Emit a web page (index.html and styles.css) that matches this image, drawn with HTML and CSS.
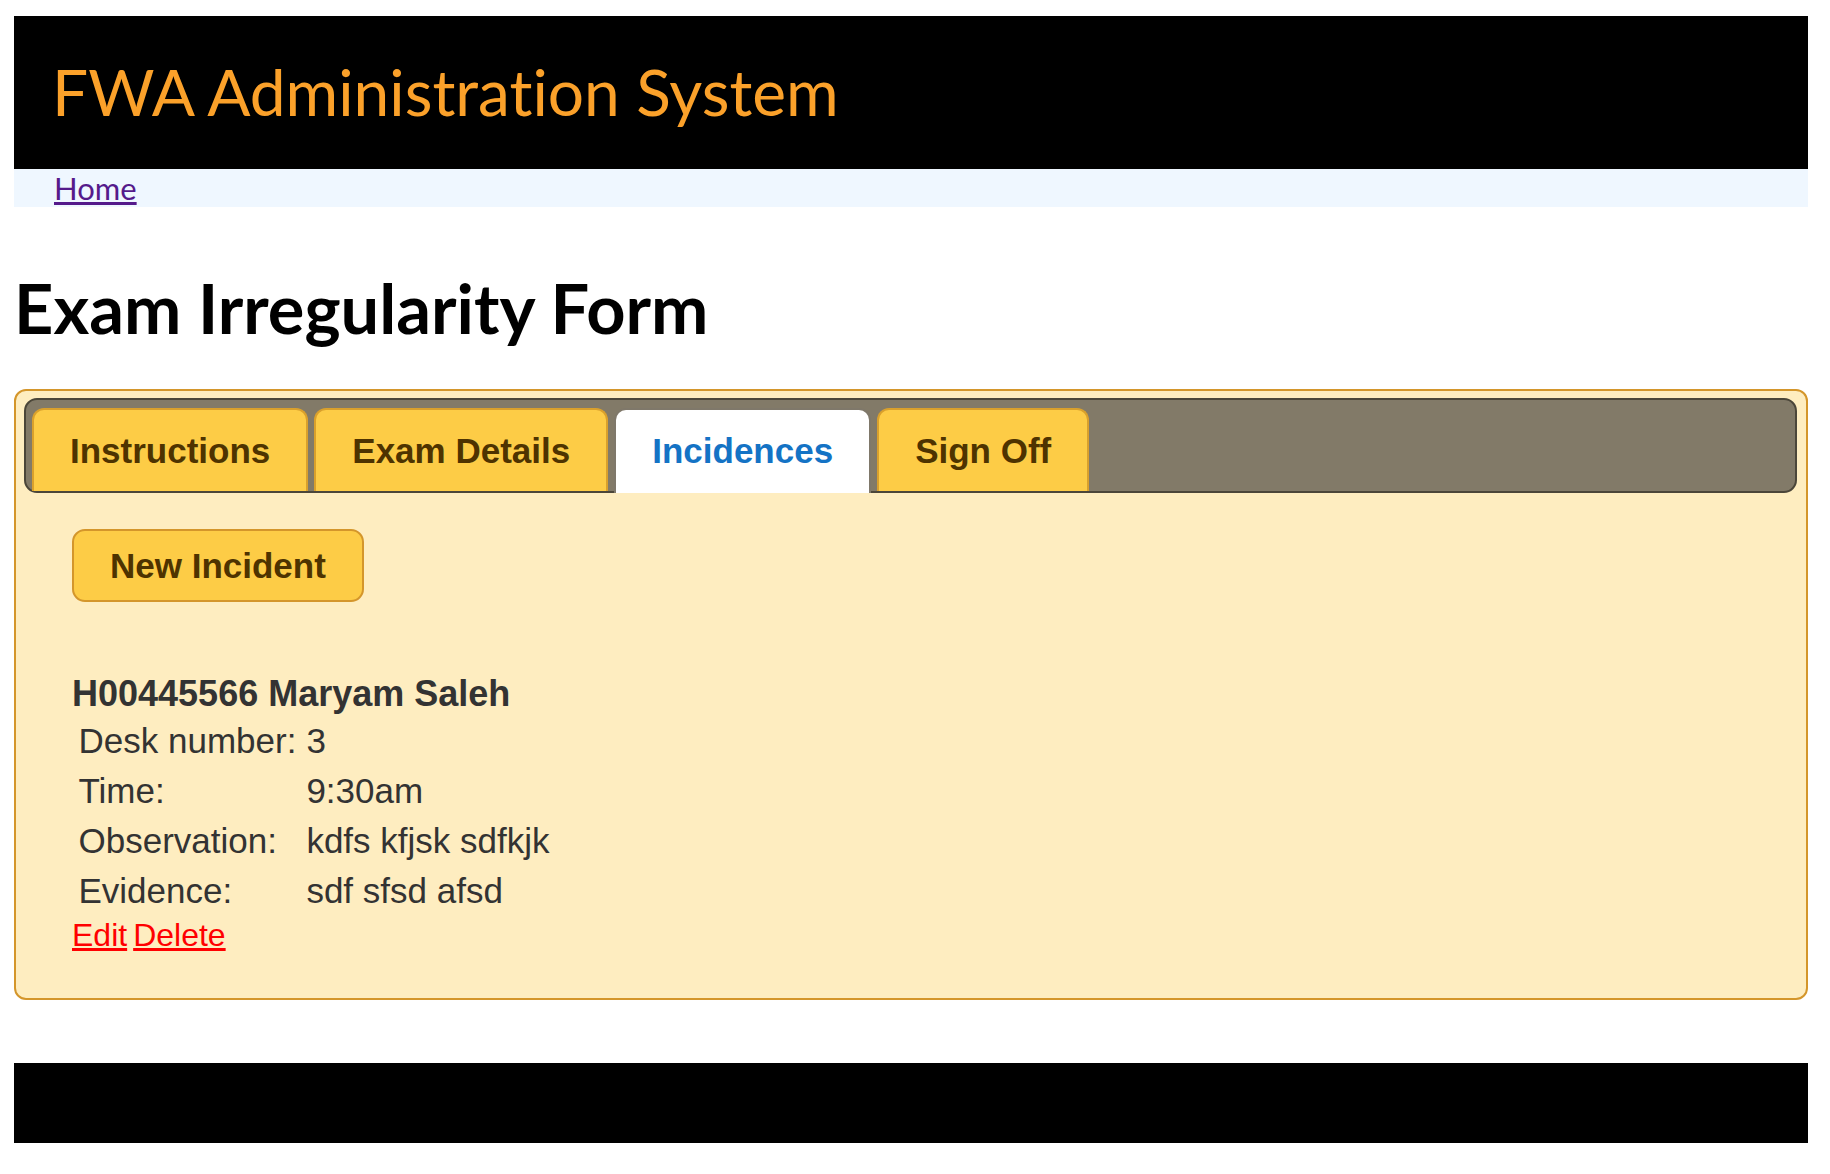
FILE: index.html
```html
<!DOCTYPE html>
<html lang="en">
<head>
<meta charset="utf-8">
<title>FWA Administration System</title>
<link rel="stylesheet" href="styles.css">
</head>
<body>
<header class="site-header">
  <div class="site-title">FWA Administration System</div>
</header>
<nav class="site-nav">
  <a class="nav-link" href="#">Home</a>
</nav>
<h1 class="page-title">Exam Irregularity Form</h1>
<section class="panel">
  <ul class="tab-bar">
    <li class="tab">Instructions</li>
    <li class="tab">Exam Details</li>
    <li class="tab tab-active">Incidences</li>
    <li class="tab">Sign Off</li>
  </ul>
  <div class="tab-content">
    <button class="btn" type="button">New Incident</button>
    <div class="incident">
      <div class="incident-name">H00445566 Maryam Saleh</div>
      <table class="incident-table">
        <tr><td>Desk number:</td><td>3</td></tr>
        <tr><td>Time:</td><td>9:30am</td></tr>
        <tr><td>Observation:</td><td>kdfs kfjsk sdfkjk</td></tr>
        <tr><td>Evidence:</td><td>sdf sfsd afsd</td></tr>
      </table>
      <div class="incident-actions">
        <a class="action-link" href="#">Edit</a><a class="action-link" href="#">Delete</a>
      </div>
    </div>
  </div>
</section>
<footer class="site-footer"></footer>
</body>
</html>
```
FILE: styles.css
```css
html, body {
  background: #ffffff;
}
body {
  margin: 16px 22px 16px 14px;
  font-family: "Liberation Sans", Arial, sans-serif;
}
.site-header {
  background: #000000;
  height: 153px;
  display: flex;
  align-items: center;
  padding-left: 38px;
}
.site-title {
  font-family: Lato, "Open Sans", sans-serif;
  font-size: 64px;
  color: #fba12a;
  line-height: 1.2;
  font-variant-ligatures: none;
}
.site-nav {
  background: #eff7ff;
  height: 38px;
  padding-left: 40px;
}
.nav-link {
  font-family: Lato, "Open Sans", sans-serif;
  font-size: 31px;
  line-height: 38px;
  color: #551a8b;
  text-decoration: underline;
}
.page-title {
  font-family: Lato, "Open Sans", sans-serif;
  font-weight: 700;
  font-size: 68.5px;
  line-height: 82px;
  margin: 60px 0 40px 0;
  color: #000;
  font-variant-ligatures: none;
}
.panel {
  background: #feedc0;
  border: 2px solid #d4962b;
  border-radius: 12px;
}
.tab-bar {
  list-style: none;
  margin: 7px 9px 0 8px;
  padding: 8px 6px 0 6px;
  background: #827a68;
  border: 2px solid #4b4639;
  border-radius: 13px;
  display: flex;
  gap: 6px;
  align-items: flex-end;
}
.tab {
  background: #fdcc46;
  border: 2px solid #d9a02c;
  border-bottom: none;
  border-radius: 12px 12px 0 0;
  padding: 21px 36px 20px;
  font-size: 35px;
  line-height: 40px;
  font-weight: 700;
  color: #4e3300;
}
.tab-active {
  background: #ffffff;
  border-color: #7f786a;
  color: #1473c5;
  margin-bottom: -2px;
  padding-bottom: 22px;
}
.tab-content {
  padding: 36px 56px 44px;
  color: #333333;
}
.btn {
  display: inline-block;
  height: 73px;
  padding: 0 36px;
  background: #fdcc46;
  border: 2px solid #d4962b;
  border-radius: 13px;
  font-family: "Liberation Sans", Arial, sans-serif;
  font-size: 35px;
  font-weight: 700;
  color: #4e3300;
  line-height: 40px;
}
.incident {
  margin-top: 71px;
}
.incident-name {
  font-size: 36px;
  font-weight: 700;
  line-height: 41px;
}
.incident-table {
  border-collapse: separate;
  border-spacing: 3.5px;
  font-size: 35px;
  line-height: 40px;
  color: #333333;
}
.incident-table td {
  padding: 3.5px;
  vertical-align: middle;
}
.incident-actions {
  display: flex;
  gap: 6px;
  font-size: 32px;
  line-height: 37px;
}
.action-link {
  color: #ff0000;
  text-decoration: underline;
}
.site-footer {
  background: #000000;
  height: 80px;
  margin-top: 63px;
}
```
